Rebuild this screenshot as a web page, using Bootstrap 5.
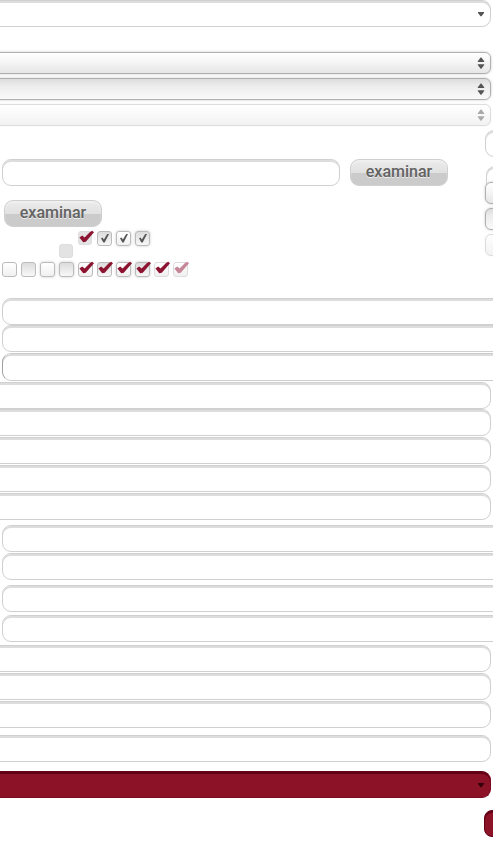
<!DOCTYPE html>
<html lang="es">
<head>
<meta charset="utf-8">
<meta name="viewport" content="width=device-width, initial-scale=1">
<title>Formulario</title>
<link href="https://cdn.jsdelivr.net/npm/bootstrap@5.3.0/dist/css/bootstrap.min.css" rel="stylesheet">
<style>
body { font-family: "Noto Sans", sans-serif; background: #fff; }
.sheet { overflow: hidden; min-height: 100vh; }
.field { display: block; height: 27px; border: 1px solid #d0d0d0; border-radius: 9px; background: #fff; box-shadow: inset 0 2px 0 #ddd; padding: 3px 10px 0; appearance: none; font-size: 13px; }
.field:focus { outline: 0; border-color: #999; }
.from-left { width: calc(100% + 18px); margin-left: -20px; }
.from-right { width: calc(100% + 18px); margin-left: 2px; }
.strong { height: 28px; border-color: #ccc #ccc #ccc #a0a0a0; }
.picker { position: relative; }
.picker svg { position: absolute; right: 8px; top: 0; height: 100%; width: 8px; pointer-events: none; fill: #555; }
.red { background: #8c1228; border-color: #640015 #7a0a1f #7a0a1f; box-shadow: inset 0 2px 0 #640015; }
.picker .dark-arrow { fill: #35000b; }
.combo { display: block; height: 22px; border: 1px solid #b0b0b0; border-radius: 6px; appearance: none; background: linear-gradient(#fff, #f4f4f4 50%, #e6e6e6); box-shadow: 0 0 3px #ccc; font-size: 12px; }
.combo.pressed { background: linear-gradient(#dcdcdc, #ebebeb 30%, #fafafa); }
.combo.faded { opacity: 1; border-color: #ddd; background: linear-gradient(#fff, #f2f2f2); box-shadow: 0 0 2px #eee; }
.picker .faded-arrow { fill: #aaa; }
.gap-b { margin-top: 4px; }
.gap-c { margin-top: 25px; }
.middle { height: 172px; }
.side { width: 8px; flex: none; padding-top: 4px; overflow: visible; }
.side .field, .side .combo { width: 40px; flex: none; }
.side .combo { margin-bottom: 4px; position: relative; }
.side .tucked { margin: 9px 0 -11px 1px; }
.upload { padding: 33px 0 0 2px; gap: 10px; }
.upload .field { width: 338px; }
.browse { width: 98px; height: 27px; border: 1px solid #cfcfcf; border-radius: 9px; padding: 0 0 2px; font-family: Roboto, sans-serif; font-size: 16px; line-height: 20px; font-weight: 500; color: #626262; text-shadow: 0 1px 0 #eee; background: linear-gradient(#ebebeb, #e1e1e1 52%, #cbcbcb 53%, #cbcbcb); box-shadow: inset 0 2px 1px #f0f0f0; }
.second { margin: 14px 0 0 4px; }
.ticks { gap: 4px; padding-left: 2px; }
.upper { padding-left: 59px; margin-top: 4px; }
.lower { margin-top: 3px; }
.tick { position: relative; width: 15px; height: 15px; display: block; }
.tick input { appearance: none; display: block; margin: 0; width: 15px; height: 15px; border: 1px solid #bbb; border-radius: 3px; background: linear-gradient(#fff, #f0f0f0); }
.tick svg { position: absolute; left: 0; top: -2px; width: 18px; height: 18px; pointer-events: none; }
.tick .down { background: linear-gradient(#dcdcdc, #f8f8f8); }
.tick .glow { box-shadow: 0 0 3px #ccc; }
.tick .flat { width: 14px; height: 14px; border-color: #ddd; background: #e3e3e3; }
.tick .pale { border-color: #ddd; }
.drop { margin-top: 13px; }
.group-a { margin-top: 5px; }
.group-b { margin-top: 3px; }
.group-c { margin-top: 7px; }
.group-d { margin-top: 9px; }
.gap-field { margin-top: 1px; }
.send { width: 30px; height: 27px; margin: 12px -21px 0 auto; border-radius: 8px; border: 1px solid #640015; padding: 0; }
</style>
</head>
<body>
<svg class="d-none" aria-hidden="true">
<symbol id="check" viewBox="0 0 18 18"><path d="M1.4 8.4 4.2 6.5 6.6 8.4 12 3 14.2 1.8 16 3.2 7.8 12.8 5.2 13.2Z"/></symbol>
<symbol id="small-check" viewBox="0 0 18 18"><path d="M4 9.3 5.5 8.4 6.9 10.5 10.2 4.9 12 4.9 7.7 13.4 6.3 13.4Z"/></symbol>
<symbol id="down" viewBox="0 0 8 27"><path d="M1 12h6v1L4.5 16.2h-1L1 13Z"/></symbol>
<symbol id="updown" viewBox="0 0 8 22"><path d="M.8 10V9.2L3.6 5.5h.8L7.2 9.2v.8ZM.8 12.2h6.4v.8L4.4 16.7h-.8L.8 13Z"/></symbol>
</svg>
<main class="sheet d-flex flex-column">
<div class="picker"><select class="field from-left" aria-label="Opción"></select><svg><use href="#down"/></svg></div>
<div class="picker gap-c"><select class="combo from-left" aria-label="Lista"></select><svg><use href="#updown"/></svg></div>
<div class="picker gap-b"><select class="combo pressed from-left" aria-label="Lista activa"></select><svg><use href="#updown"/></svg></div>
<div class="picker gap-b"><select class="combo faded from-left" disabled aria-label="Lista desactivada"></select><svg class="faded-arrow"><use href="#updown"/></svg></div>
<div class="middle d-flex">
<section class="flex-grow-1">
<div class="upload d-flex"><input class="field" type="text" aria-label="Archivo"><button class="browse" type="button">examinar</button></div>
<button class="browse second d-block" type="button">examinar</button>
<div class="ticks upper d-flex">
<label class="tick drop"><input class="flat" type="checkbox" aria-label="Casilla"></label>
<label class="tick"><input class="flat" type="checkbox" checked aria-label="Casilla"><svg fill="#8c1430"><use href="#check"/></svg></label>
<label class="tick"><input class="down" type="checkbox" checked aria-label="Casilla"><svg fill="#555"><use href="#small-check"/></svg></label>
<label class="tick"><input class="glow" type="checkbox" checked aria-label="Casilla"><svg fill="#555"><use href="#small-check"/></svg></label>
<label class="tick"><input class="down glow" type="checkbox" checked aria-label="Casilla"><svg fill="#555"><use href="#small-check"/></svg></label>
</div>
<div class="ticks lower d-flex">
<label class="tick"><input type="checkbox" aria-label="Casilla"></label>
<label class="tick"><input class="down" type="checkbox" aria-label="Casilla"></label>
<label class="tick"><input class="glow" type="checkbox" aria-label="Casilla"></label>
<label class="tick"><input class="down glow" type="checkbox" aria-label="Casilla"></label>
<label class="tick"><input type="checkbox" checked aria-label="Casilla"><svg fill="#8c1430"><use href="#check"/></svg></label>
<label class="tick"><input class="down" type="checkbox" checked aria-label="Casilla"><svg fill="#8c1430"><use href="#check"/></svg></label>
<label class="tick"><input class="glow" type="checkbox" checked aria-label="Casilla"><svg fill="#8c1430"><use href="#check"/></svg></label>
<label class="tick"><input class="down glow" type="checkbox" checked aria-label="Casilla"><svg fill="#8c1430"><use href="#check"/></svg></label>
<label class="tick"><input class="pale" type="checkbox" checked aria-label="Casilla"><svg fill="#8c1430"><use href="#check"/></svg></label>
<label class="tick"><input class="pale" type="checkbox" checked disabled aria-label="Casilla"><svg fill="#c68898"><use href="#check"/></svg></label>
</div>
</section>
<aside class="side">
<input class="field" type="text" aria-label="Campo">
<input class="field tucked" type="text" aria-label="Campo">
<select class="combo" aria-label="Lista"></select>
<select class="combo pressed" aria-label="Lista"></select>
<select class="combo faded" disabled aria-label="Lista"></select>
</aside>
</div>
<input class="field from-right" type="text" aria-label="Campo">
<input class="field from-right" type="text" aria-label="Campo">
<input class="field from-right strong gap-field" type="text" aria-label="Campo">
<input class="field from-left gap-field" type="text" aria-label="Campo">
<input class="field from-left" type="text" aria-label="Campo">
<input class="field from-left gap-field" type="text" aria-label="Campo">
<input class="field from-left gap-field" type="text" aria-label="Campo">
<input class="field from-left gap-field" type="text" aria-label="Campo">
<input class="field from-right group-a" type="text" aria-label="Campo">
<input class="field from-right gap-field" type="text" aria-label="Campo">
<input class="field from-right group-a" type="text" aria-label="Campo">
<input class="field from-right group-b" type="text" aria-label="Campo">
<input class="field from-left group-b" type="text" aria-label="Campo">
<input class="field from-left gap-field" type="text" aria-label="Campo">
<input class="field from-left gap-field" type="text" aria-label="Campo">
<input class="field from-left group-c" type="text" aria-label="Campo">
<div class="picker group-d"><select class="field red from-left" aria-label="Opción"></select><svg class="dark-arrow"><use href="#down"/></svg></div>
<button class="send red" type="button" aria-label="Enviar"></button>
</main>
<script src="https://cdn.jsdelivr.net/npm/bootstrap@5.3.0/dist/js/bootstrap.bundle.min.js"></script>
</body>
</html>
